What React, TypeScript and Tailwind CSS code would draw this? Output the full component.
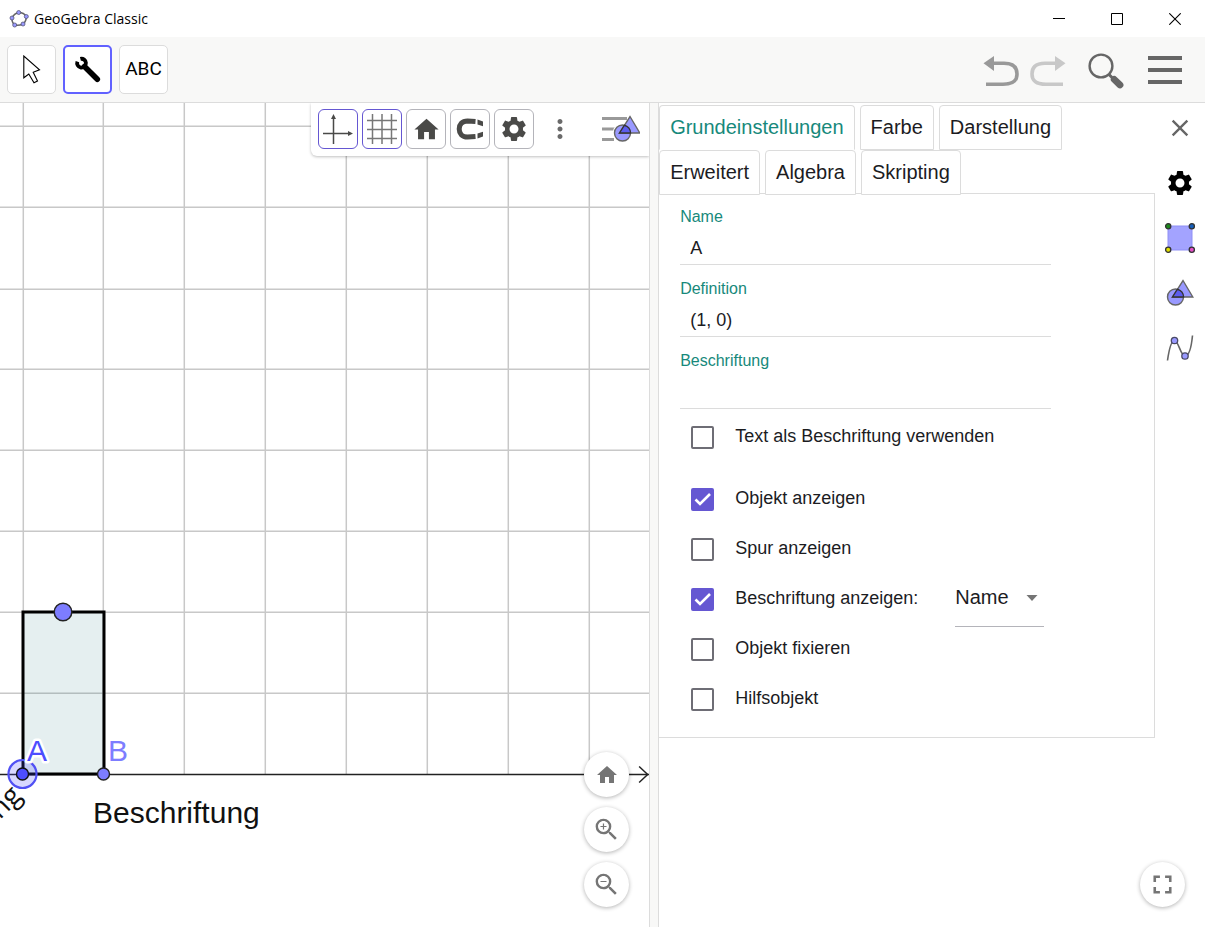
import React, { useState } from "react";
import { MdClose, MdFullscreen, MdHome, MdMoreVert, MdSettings, MdZoomIn, MdZoomOut } from "react-icons/md";

const GRID_X = [23, 103, 184, 265, 346, 427, 508, 589];
const GRID_Y = [23, 104, 186, 266, 347, 428, 509, 590];
const AXIS_Y = 671;

function Logo() {
  const nodes = [[9.7, 3.5], [17.3, 7.5], [14, 15], [5.7, 16], [3, 9]];
  return (
    <svg width="20" height="20" viewBox="0 0 20 20" aria-hidden="true">
      <path d="M9.7 3.5Q15 3.5 17.3 7.5Q17.5 12 14 15Q10 17 5.7 16Q2.5 13 3 9Q5 4.5 9.7 3.5Z" fill="none" stroke="#666" strokeWidth="1.5" />
      {nodes.map(([x, y]) => (
        <circle key={x} cx={x} cy={y} r="2" fill="#9999ff" stroke="#555577" strokeWidth="0.8" />
      ))}
    </svg>
  );
}

function TitleBar() {
  const control = "flex h-full w-[58px] items-center justify-center";
  return (
    <header className="flex h-[37px] items-center bg-white pl-[9px] pr-px">
      <Logo />
      <h1 className="ml-[5px] font-['Open_Sans',sans-serif] text-[14px] text-black">GeoGebra Classic</h1>
      <div className="ml-auto flex h-full">
        <button className={control} aria-label="Minimieren">
          <svg width="12" height="12" viewBox="0 0 12 12"><path d="M0 5.5H12" stroke="#000" /></svg>
        </button>
        <button className={control} aria-label="Maximieren">
          <svg width="12" height="12" viewBox="0 0 12 12"><path d="M.5 .5H11.5V11.5H.5Z" fill="none" stroke="#000" /></svg>
        </button>
        <button className={control} aria-label="Schließen">
          <svg width="12" height="12" viewBox="0 0 12 12"><path d="M.3 .3L11.7 11.7M11.7 .3L.3 11.7" stroke="#000" strokeWidth="1.1" /></svg>
        </button>
      </div>
    </header>
  );
}

function MainToolbar() {
  const tool = "flex size-[49px] items-center justify-center rounded-[5px] border border-[#dcdcdc] bg-white";
  return (
    <div className="flex h-[66px] items-center border-b border-[#dcdcdc] bg-[#f8f8f7] pl-[7px] pr-[22px]">
      <div className="flex gap-[7px]">
        <button className={tool} aria-label="Bewege">
          <svg width="20" height="30" viewBox="0 0 20 30">
            <path d="M1.8 1V22.8L6.8 19L12 27.8L15.5 26L11.200 17.200L17.500 14.800Z" fill="#fff" stroke="#000" strokeWidth="1.1" />
          </svg>
        </button>
        <button className="flex size-[49px] items-center justify-center rounded-[5px] border-2 border-[#6161ff] bg-white" aria-label="Werkzeuge">
          <svg width="28" height="28" viewBox="0 0 28 28">
            <path d="M3.400 5.600A4.400 4.400 0 1 0 6.400 2.900" fill="none" stroke="#000" strokeWidth="3.800" />
            <path d="M10.500 10.500L23.300 23.300" stroke="#000" strokeWidth="5.600" strokeLinecap="round" />
          </svg>
        </button>
        <button className={tool}><span className="font-[Roboto,sans-serif] text-[19px] text-black">ABC</span></button>
      </div>
      <div className="ml-auto flex">
        <button aria-label="Rückgängig">
          <svg width="36" height="36" viewBox="0 0 36 36">
            <path d="M.5 11.3L11 4V19Z" fill="#999" />
            <path d="M10 11.3H21C31 11.3 34 16 34 22S31 32.3 20 32.3H3" fill="none" stroke="#999" strokeWidth="3.6" />
          </svg>
        </button>
        <button className="ml-[11px]" aria-label="Wiederherstellen">
          <svg width="36" height="36" viewBox="0 0 36 36">
            <path d="M35.5 11.3L25 4V19Z" fill="#c8c8c8" />
            <path d="M26 11.3H15C5 11.3 2 16 2 22S5 32.3 16 32.3H33" fill="none" stroke="#c8c8c8" strokeWidth="3.6" />
          </svg>
        </button>
        <button className="ml-[22px]" aria-label="Suchen">
          <svg width="36" height="38" viewBox="0 0 36 38">
            <circle cx="13" cy="15" r="11.4" fill="none" stroke="#666" strokeWidth="2.4" />
            <path d="M21 23.5L26 28.5" stroke="#666" strokeWidth="3" />
            <path d="M26.2 28.4L32 34" stroke="#666" strokeWidth="6.8" strokeLinecap="round" />
          </svg>
        </button>
        <button className="ml-[23px]" aria-label="Menü">
          <svg width="36" height="36" viewBox="0 0 36 36">
            <path d="M1 6H35M1 18H35M1 30H35" stroke="#666" strokeWidth="4" />
          </svg>
        </button>
      </div>
    </div>
  );
}

function Canvas() {
  return (
    <svg className="absolute inset-0 size-full" role="img" aria-label="Grafik-Ansicht">
      <g stroke="#c8c8c8" strokeWidth="1.5">
        {GRID_X.map((x) => <line key={x} x1={x + 0.3} x2={x + 0.3} y1="0" y2={AXIS_Y} />)}
        {GRID_Y.map((y) => <line key={y} x1="0" x2="100%" y1={y + 0.3} y2={y + 0.3} />)}
      </g>
      <line x1="0" x2="100%" y1={AXIS_Y + 0.5} y2={AXIS_Y + 0.5} stroke="#222" strokeWidth="1.3" />
      <svg x="100%" overflow="visible">
        <path d={`M-10 ${AXIS_Y - 7.5}L-1.5 ${AXIS_Y + 0.5}L-10 ${AXIS_Y + 8.5}`} fill="none" stroke="#222" strokeWidth="1.5" />
      </svg>
      <rect x="23" y="509" width="81" height="162" fill="#006070" fillOpacity="0.1" stroke="#000" strokeWidth="3" />
      <circle cx="63" cy="509" r="8.8" fill="#7d7dff" stroke="#222" strokeWidth="1.5" />
      <circle cx="22.5" cy="671" r="14" fill="#4d4dff" fillOpacity="0.22" stroke="#5050f4" strokeWidth="2.2" />
      <circle cx="22.5" cy="671" r="6" fill="#4d4dff" stroke="#111" strokeWidth="1.4" />
      <circle cx="103.5" cy="671" r="6" fill="#7d7dff" stroke="#222" strokeWidth="1.4" />
      <g fontSize="30">
        <text x="27" y="658" fill="#4d4dff" stroke="#fff" strokeWidth="5" strokeLinejoin="round" paintOrder="stroke">A</text>
        <text x="108" y="658" fill="#7d7dff">B</text>
        <text x="93" y="720" fill="#111">Beschriftung</text>
        <text className="font-['Open_Sans',sans-serif] text-[28px]" transform="translate(23 694) rotate(-45)" textAnchor="end" fill="#111">Beschriftung</text>
      </g>
    </svg>
  );
}

function Shapes() {
  return (
    <>
      <circle cx="9.5" cy="18" r="8" fill="#9999ff" stroke="#666" strokeWidth="1.4" />
      <path d="M17 1.5L26.8 18H6.5Z" fill="#9999ff" stroke="#666" strokeWidth="1.4" />
      <path d="M6.5 18L11.4 10.2A8 8 0 0 1 17.5 18Z" fill="#5c5cee" stroke="#333" strokeWidth="1.4" />
    </>
  );
}

function ViewToolbar() {
  const base = "flex size-10 items-center justify-center rounded-[6px] border bg-white text-[#4a4a48]";
  const on = `${base} border-[#6557d2]`;
  const off = `${base} border-[#b4b4ba]`;
  return (
    <div className="absolute right-0 top-0 flex items-center gap-1 rounded-bl-[6px] bg-white pb-[7px] pl-[7px] pr-[9px] pt-[6px] shadow-[0_1px_3px_rgba(0,0,0,0.25)]">
      <button className={on} aria-label="Achsen">
        <svg width="32" height="32" viewBox="0 0 32 32">
          <path d="M11.5 4V31M1 20.5H28" stroke="currentColor" strokeWidth="1.5" />
          <path d="M11.5 1L14 6H9ZM31 20.5L26 18V23Z" fill="currentColor" />
        </svg>
      </button>
      <button className={on} aria-label="Gitter">
        <svg width="32" height="32" viewBox="0 0 32 32">
          <path d="M6.5 1V31M16 1V31M25.5 1V31M1 7.5H31M1 16.5H31M1 25.5H31" stroke="#777" strokeWidth="1.5" />
        </svg>
      </button>
      <button className={off} aria-label="Standardansicht"><MdHome size={29} /></button>
      <button className={off} aria-label="Einrasten">
        <svg width="30" height="24" viewBox="0 0 30 24">
          <path d="M20.500 4.500L12.500 3.900C7 4 4.200 7.500 4.200 12S7 20 12.500 20.100L20.500 19.500" fill="none" stroke="currentColor" strokeWidth="5" />
          <path d="M22.500 2.600L28 4.400V9.200L22.500 7.600ZM22.500 16.400L28 14.800V19.600L22.500 21.400Z" fill="currentColor" />
        </svg>
      </button>
      <button className={off} aria-label="Einstellungen"><MdSettings size={30} /></button>
      <button className="ml-[2px] flex size-10 items-center justify-center text-[#6a6a6a]" aria-label="Mehr"><MdMoreVert size={30} /></button>
      <button className="ml-[16px]" aria-label="Stilleiste">
        <svg width="40" height="30" viewBox="0 0 40 30">
          <path d="M2 4.5H27M2 15H16M2 25.5H14" stroke="#999" strokeWidth="3" />
          <circle cx="22.500" cy="19" r="9.8" fill="#fff" />
          <g transform="translate(13 1)"><Shapes /></g>
        </svg>
      </button>
    </div>
  );
}

const ROUND = "flex size-[45px] items-center justify-center rounded-full bg-white text-[#757575] shadow-[0_1px_4px_rgba(0,0,0,0.3)]";

function GraphicsView() {
  return (
    <main className="relative min-w-0 flex-1 overflow-hidden bg-white">
      <Canvas />
      <ViewToolbar />
      <div className="absolute bottom-5 right-5 flex flex-col gap-[10px]">
        <button className={ROUND} aria-label="Standardansicht"><MdHome size={24} /></button>
        <button className={ROUND} aria-label="Vergrößern"><MdZoomIn size={29} /></button>
        <button className={ROUND} aria-label="Verkleinern"><MdZoomOut size={29} /></button>
      </div>
    </main>
  );
}

const TABS = ["Grundeinstellungen", "Farbe", "Darstellung", "Erweitert", "Algebra", "Skripting"];

function Tabs() {
  const [active, setActive] = useState(TABS[0]);
  return (
    <div role="tablist" className="relative flex flex-wrap gap-x-[5px]">
      {TABS.map((tab) => (
        <button
          key={tab}
          role="tab"
          aria-selected={tab === active}
          onClick={() => setActive(tab)}
          className={`h-[45px] rounded-t-[4px] border bg-white px-[10px] pb-[2px] text-[20px] ${
            tab === active ? "border-[#dcdcdc] border-b-white text-[#17897b]" : "border-[#dcdcdc] text-[#1c1c1f]"
          }`}
        >
          {tab}
        </button>
      ))}
    </div>
  );
}

function Field({ id, label, value }: { id: string; label: string; value: string }) {
  return (
    <div className="mb-[11px]">
      <label htmlFor={id} className="block h-6 pt-px text-[16px] leading-6 text-[#17897b]">{label}</label>
      <input id={id} defaultValue={value} className="block h-[37px] w-full border-b border-[#dcdcdc] px-[10px] pt-1 text-[18px] text-[#1c1c1f] outline-none" />
    </div>
  );
}

function Check({ label, checked = false }: { label: string; checked?: boolean }) {
  return (
    <label className="flex h-[50px] items-center">
      <span className="grid">
        <input
          type="checkbox"
          defaultChecked={checked}
          className="peer col-start-1 row-start-1 size-[23px] appearance-none rounded-[2px] border-2 border-[#6e6d75] bg-white checked:border-[#6557d2] checked:bg-[#6557d2]"
        />
        <svg className="pointer-events-none invisible col-start-1 row-start-1 size-[23px] peer-checked:visible" viewBox="0 0 23 23">
          <path d="M4.500 11.500L9 16L19 6" fill="none" stroke="#fff" strokeWidth="2.6" />
        </svg>
      </span>
      <span className="ml-[21px] pb-px text-[18px] text-[#1c1c1f]">{label}</span>
    </label>
  );
}

function BasicSettings() {
  return (
    <form className="-mt-[2px] border border-l-0 border-[#dcdcdc] pb-[13px] pl-[21px] pt-[10px]">
      <div className="max-w-[371px]">
        <Field id="name" label="Name" value="A" />
        <Field id="definition" label="Definition" value="(1, 0)" />
        <Field id="caption" label="Beschriftung" value="" />
      </div>
      <div className="-mt-[8px] pl-[11px]">
        <Check label="Text als Beschriftung verwenden" />
        <div className="h-3" />
        <Check label="Objekt anzeigen" checked />
        <Check label="Spur anzeigen" />
        <div className="flex items-center">
          <Check label="Beschriftung anzeigen:" checked />
          <div className="-my-1 ml-[37px] grid w-[89px] items-center">
            <select aria-label="Beschriftungsart" className="col-start-1 row-start-1 h-14 appearance-none border-b border-[#b4b4ba] bg-transparent pb-1 text-[20px] text-[#1c1c1f]">
              <option>Name</option>
              <option>Wert</option>
            </select>
            <svg className="pointer-events-none col-start-1 row-start-1 mb-[3px] mr-[6px] justify-self-end" width="12" height="6" viewBox="0 0 12 6">
              <path d="M.5 0H11.5L6 6Z" fill="#757575" />
            </svg>
          </div>
        </div>
        <Check label="Objekt fixieren" />
        <Check label="Hilfsobjekt" />
      </div>
    </form>
  );
}

function ObjectKinds() {
  const item = "flex h-[50px] w-full items-center justify-center";
  return (
    <nav className="flex w-[50px] shrink-0 flex-col gap-[5px]">
      <button className={`${item} text-[#666]`} aria-label="Schließen"><MdClose size={28} /></button>
      <button className={`${item} text-black`} aria-label="Objekte"><MdSettings size={30} /></button>
      <button className={item} aria-label="Grafik">
        <svg width="32" height="32" viewBox="0 0 32 32">
          <path d="M4 4H28V28H4Z" fill="#a3a3ff" stroke="#8f8ff5" />
          <g stroke="#333" strokeWidth="1.3">
            <circle cx="4.2" cy="4.2" r="2.6" fill="#1c8a1c" />
            <circle cx="27.8" cy="4.2" r="2.6" fill="#1560bd" />
            <circle cx="4.2" cy="27.8" r="2.6" fill="#e0e000" />
            <circle cx="27.8" cy="27.8" r="2.6" fill="#e550c8" />
          </g>
        </svg>
      </button>
      <button className={item} aria-label="Formen">
        <svg width="28" height="28" viewBox="0 0 28 28"><Shapes /></svg>
      </button>
      <button className={item} aria-label="Funktionen">
        <svg width="28" height="28" viewBox="0 0 28 28">
          <path d="M1.5 26.5C3 16 5.5 6.5 8.5 6.5C12.5 6.5 14.5 22 19 22C23 22 25.5 12 26.5 1.5" fill="none" stroke="#666" strokeWidth="1.6" />
          <circle cx="8.5" cy="6.5" r="3.2" fill="#9999ff" stroke="#4a4a66" strokeWidth="1.3" />
          <circle cx="19" cy="22" r="3.2" fill="#9999ff" stroke="#4a4a66" strokeWidth="1.3" />
        </svg>
      </button>
    </nav>
  );
}

export default function App() {
  return (
    <div className="flex min-h-screen flex-col bg-white font-['Liberation_Sans',Arial,sans-serif]">
      <TitleBar />
      <MainToolbar />
      <div className="flex flex-1">
        <GraphicsView />
        <div className="w-[10px] shrink-0 border-x border-[#dcdcdc] bg-[#f8f8f7]" />
        <aside className="relative flex w-[45.3%] shrink-0">
          <div className="min-w-0 flex-1 pt-[2px]">
            <Tabs />
            <BasicSettings />
          </div>
          <ObjectKinds />
          <button className={`${ROUND} absolute bottom-5 right-5`} aria-label="Vollbild"><MdFullscreen size={31} /></button>
        </aside>
      </div>
    </div>
  );
}
